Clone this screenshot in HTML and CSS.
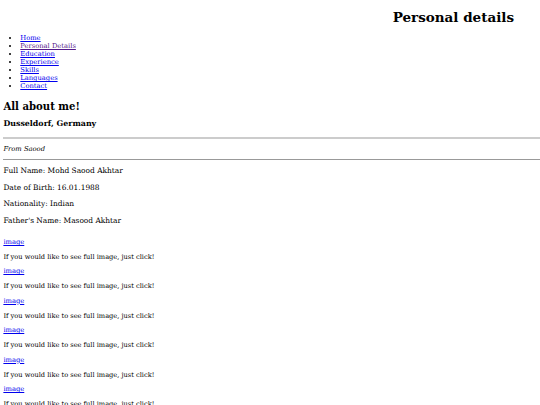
FILE: index.html
```html
<!DOCTYPE html>
<html lang="en">
<head>
<meta charset="utf-8">
<title>Personal details</title>
<link rel="stylesheet" href="styles.css">
</head>
<body>
<header class="top">
  <h1 class="title">Personal details</h1>
</header>
<nav>
  <ul class="menu">
    <li><a href="#home">Home</a></li>
    <li><a class="visited" href="#personal">Personal Details</a></li>
    <li><a href="#education">Education</a></li>
    <li><a href="#experience">Experience</a></li>
    <li><a href="#skills">Skills</a></li>
    <li><a href="#languages">Languages</a></li>
    <li><a href="#contact">Contact</a></li>
  </ul>
</nav>
<main>
  <h2 class="about">All about me!</h2>
  <h3 class="city">Dusseldorf, Germany</h3>
  <hr class="rule rule-light">
  <p class="from">From Saood</p>
  <hr class="rule rule-dark">
  <div class="details">
    <p class="info">Full Name: Mohd Saood Akhtar</p>
    <p class="info">Date of Birth: 16.01.1988</p>
    <p class="info">Nationality: Indian</p>
    <p class="info">Father's Name: Masood Akhtar</p>
  </div>
  <div class="gallery">
    <div class="item"><a href="#img1">image</a><p class="caption">If you would like to see full image, just click!</p></div>
    <div class="item"><a href="#img2">image</a><p class="caption">If you would like to see full image, just click!</p></div>
    <div class="item"><a href="#img3">image</a><p class="caption">If you would like to see full image, just click!</p></div>
    <div class="item"><a href="#img4">image</a><p class="caption">If you would like to see full image, just click!</p></div>
    <div class="item"><a href="#img5">image</a><p class="caption">If you would like to see full image, just click!</p></div>
    <div class="item"><a href="#img6">image</a><p class="caption">If you would like to see full image, just click!</p></div>
  </div>
</main>
</body>
</html>
```
FILE: styles.css
```css
html, body {
  background: #ffffff;
}
body {
  margin: 0 0 0 3.375px;
  font-family: "DejaVu Serif", serif;
  font-size: 6.75px;
  color: #000;
  overflow: hidden;
}
a {
  color: #0000ee;
}
a.visited {
  color: #551a8b;
}
.top {
  display: flow-root;
  padding-right: 26px;
  text-align: right;
}
.title {
  margin: 9.05px 0 0 0;
  font-size: 13.5px;
  line-height: normal;
}
.menu {
  margin: 9.05px 0 0 0;
  padding-left: 16.9px;
  line-height: normal;
}
.about {
  margin: 9.6px 0 0 0;
  font-size: 10.125px;
  line-height: normal;
}
.city {
  margin: 7.2px 0 0 0;
  font-size: 7.9px;
  line-height: normal;
}
.rule {
  height: 0;
  border: 0;
}
.rule-light {
  margin: 8.9px 0 0 0;
  border-top: 2px solid #cccccc;
}
.rule-dark {
  margin: 6.6px 0 0 0;
  border-top: 1px solid #999999;
}
.from {
  font-style: italic;
  margin: 6.1px 0 0 0;
  line-height: normal;
}
.details {
  display: flex;
  flex-direction: column;
  gap: 7.55px;
  margin-top: 5.6px;
}
.info {
  margin: 0;
  font-size: 7.43px;
  line-height: normal;
}
.gallery {
  display: flex;
  flex-direction: column;
  gap: 6.5px;
  margin-top: 13.4px;
}
.item {
  display: flex;
  flex-direction: column;
  align-items: flex-start;
  gap: 6.9px;
  line-height: normal;
}
.caption {
  margin: 0;
  font-size: 6.65px;
}
```
